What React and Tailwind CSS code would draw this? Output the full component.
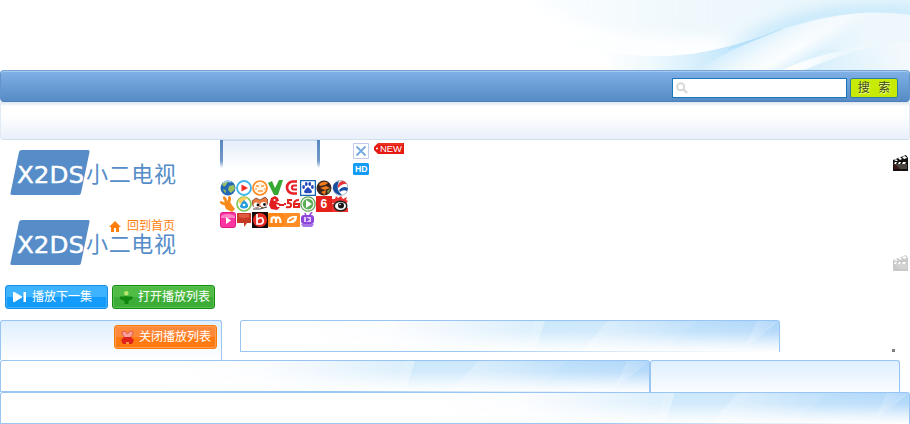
import React from 'react';

const CJK = "font-['Liberation_Sans','Noto_Sans_CJK_SC',sans-serif]";

function HeaderWaves() {
  return (
    <svg className="block h-[70px] w-[910px]" viewBox="0 0 910 70">
      <defs>
        <linearGradient id="sky" gradientUnits="userSpaceOnUse" x1="500" x2="910" y1="0" y2="0">
          <stop offset="0" stopColor="#edf7fc" stopOpacity="0" />
          <stop offset=".45" stopColor="#edf7fc" stopOpacity=".85" />
          <stop offset="1" stopColor="#e6f5fc" />
        </linearGradient>
        <linearGradient id="low" gradientUnits="userSpaceOnUse" x1="600" x2="740" y1="0" y2="0">
          <stop offset="0" stopColor="#fff" />
          <stop offset=".4" stopColor="#edf8fe" />
          <stop offset="1" stopColor="#bfe5fc" />
        </linearGradient>
        <linearGradient id="wave" gradientUnits="userSpaceOnUse" x1="760" y1="30" x2="790" y2="80">
          <stop offset="0" stopColor="#d3edfc" />
          <stop offset=".35" stopColor="#f0f9fe" />
          <stop offset=".6" stopColor="#fbfdff" />
          <stop offset=".85" stopColor="#dcf1fc" />
        </linearGradient>
        <linearGradient id="top" gradientUnits="userSpaceOnUse" x1="800" x2="870" y1="0" y2="0">
          <stop offset="0" stopColor="#f0f8fc" stopOpacity="0" />
          <stop offset="1" stopColor="#f0f8fc" />
        </linearGradient>
        <linearGradient id="tail" gradientUnits="userSpaceOnUse" x1="810" x2="900" y1="70" y2="45">
          <stop offset="0" stopColor="#d6effc" />
          <stop offset="1" stopColor="#f3f9fd" />
        </linearGradient>
        <linearGradient id="streak" gradientUnits="userSpaceOnUse" x1="790" x2="884" y1="0" y2="0">
          <stop offset="0" stopColor="#fff" />
          <stop offset="1" stopColor="#fff" stopOpacity="0" />
        </linearGradient>
        <filter id="soft" x="-20%" y="-60%" width="140%" height="220%"><feGaussianBlur stdDeviation="7" /></filter>
        <filter id="slight" x="-20%" y="-60%" width="140%" height="220%"><feGaussianBlur stdDeviation=".7" /></filter>
        <clipPath id="above"><path d="M500 0H910V15C860 9 820 17 780 30C740 43 705 56 660 56C620 56 590 49 560 42Z" /></clipPath>
      </defs>
      <rect width="910" height="70" fill="#fff" />
      <path d="M490 -20H930V40H660Q570 32 490 -20Z" fill="url(#sky)" filter="url(#soft)" />
      <g clipPath="url(#above)">
        <path d="M560 44Q640 36 720 42L700 64H580Z" fill="#fcfeff" filter="url(#soft)" />
        <path d="M725 50C760 26 810 -2 920 8V20C850 12 790 30 725 54Z" fill="#bce4fb" opacity=".85" filter="url(#soft)" />
      </g>
      <path d="M600 50C624 55 640 56 660 56C705 56 740 43 780 30L740 70H615Z" fill="url(#low)" />
      <path d="M697 70C715 58 745 44 780 30C820 17 860 9 910 15V70Z" fill="url(#wave)" filter="url(#slight)" />
      <path d="M800 24C835 14 870 9 910 15V50L800 50Z" fill="url(#top)" opacity=".9" />
      <path d="M728 49Q755 40 782 29" stroke="#9fd5f7" strokeWidth=".8" fill="none" opacity=".65" />
      <path d="M804 70Q840 54 884 44Q900 42 910 42V70Z" fill="url(#tail)" filter="url(#slight)" />
      <path d="M782 70Q825 50 884 44Q840 54 804 70Z" fill="url(#streak)" />
    </svg>
  );
}

function SearchIcon() {
  return (
    <svg className="size-3" viewBox="0 0 12 12" fill="none" stroke="#d9d9d9" strokeWidth="2">
      <circle cx="4.700" cy="4.700" r="3.500" />
      <path d="M7.400 7.400 11 11" strokeWidth="2.400" />
    </svg>
  );
}

function Logo() {
  return (
    <svg className="block h-[45px] w-[170px]" viewBox="0 0 170 45">
      <path d="M12 0H78Q80 0 79.500 2L71 43Q70.500 45 69 45H2Q0 45 .5 43L9 2Q9.500 0 12 0Z" fill="#568dc8" />
      <text x="7" y="32.500" fontSize="23" fill="#fff" stroke="#fff" strokeWidth=".4" textLength="67" lengthAdjust="spacingAndGlyphs" className="font-['DejaVu_Sans',sans-serif]">X2DS</text>
      <text x="76" y="32" fontSize="22" fill="#568dc8" textLength="90" className="font-['Noto_Sans_CJK_SC',sans-serif]">小二电视</text>
    </svg>
  );
}

function PanelArt({ id }) {
  return (
    <svg className="pointer-events-none h-[31px] w-[480px] shrink-0" viewBox="0 0 480 31">
      <defs>
        <linearGradient id={id + 'h'} x1="0" x2="1">
          <stop offset="0" stopColor="#fff" />
          <stop offset=".18" stopColor="#fcfdff" />
          <stop offset=".35" stopColor="#eaf5fe" />
          <stop offset=".5" stopColor="#d8eefc" />
          <stop offset=".75" stopColor="#c6e4fb" />
          <stop offset="1" stopColor="#b0d7fa" />
        </linearGradient>
        <linearGradient id={id + 'v'} x1="0" y1="0" x2="0" y2="1">
          <stop offset="0" stopColor="#fff" stopOpacity="0" />
          <stop offset=".35" stopColor="#fff" stopOpacity=".15" />
          <stop offset=".7" stopColor="#fff" stopOpacity=".65" />
          <stop offset="1" stopColor="#fff" />
        </linearGradient>
        <linearGradient id={id + 'a'} x1="0" x2="1">
          <stop offset="0" stopColor="#9fd3f8" stopOpacity=".25" />
          <stop offset="1" stopColor="#9fd3f8" stopOpacity=".05" />
        </linearGradient>
        <linearGradient id={id + 'b'} x1="0" x2="1">
          <stop offset="0" stopColor="#fff" stopOpacity=".25" />
          <stop offset="1" stopColor="#fff" stopOpacity="0" />
        </linearGradient>
      </defs>
      <path d="M0 0H480V31H0Z" fill={'url(#' + id + 'h)'} />
      <path d="M235 0H246L236 31H226Z" fill="#fff" opacity=".15" />
      <path d="M246 0H309L282 31H236Z" fill={'url(#' + id + 'a)'} />
      <path d="M309 0H375L345 31H282Z" fill={'url(#' + id + 'b)'} />
      <path d="M398 0H458L444 31H365Z" fill={'url(#' + id + 'a)'} />
      <path d="M458 0H480L450 22L444 31Z" fill={'url(#' + id + 'b)'} />
      <path d="M480 0V31H444L456 18Z" fill="#8fc7f6" opacity=".15" />
      <path d="M454 21 476 2" stroke="#eff8ff" opacity=".3" />
      <path d="M0 0H480V31H0Z" fill={'url(#' + id + 'v)'} />
    </svg>
  );
}

function GlossPanel({ id, className }) {
  return (
    <div className={'flex h-8 flex-col overflow-hidden rounded-t-[3px] border-x border-t border-[#98c5f3] bg-white ' + className}>
      <div className="flex h-[30px] justify-end overflow-hidden"><PanelArt id={id} /></div>
      <div className="flex h-px">
        <div className="grow bg-[#98c5f3]" />
        <div className="h-px w-[320px] bg-gradient-to-r from-[#98c5f3] via-[#dcebfa] via-50% to-white" />
      </div>
    </div>
  );
}

const sourceIcons = [
  <g><circle cx="8" cy="8" r="7.500" fill="#2368b5" /><path d="M2 4 6 1 8 2 6 5 4 7ZM9 6 14 5 15 9 11 13 8 10Z" fill="#9cc05b" /><path d="M3 9 6 10 6 13 4 12Z" fill="#84ad65" /><path d="M3 3Q7 0 11 2" stroke="#9ecbee" fill="none" strokeWidth="1.500" /></g>,
  <g><circle cx="8" cy="8" r="7" fill="#fff" stroke="#42b5e8" strokeWidth="1.900" /><path d="M5.500 4.500V11.500L12 8Z" fill="#f22b24" /></g>,
  <g><circle cx="8" cy="8" r="7" fill="#fff6e7" stroke="#ff8b22" strokeWidth="1.700" /><path d="M4 6h3M9 6h3M6 11h5" stroke="#ff9b42" strokeWidth="1.300" /><path d="M3 9h2M12 9h2" stroke="#ffc38d" strokeWidth="2" /></g>,
  <path d="M0 3 4 1 7 8 11 0H15L10 15H6Z" fill="#38a834" />,
  <g fill="none" stroke="#e6212a"><path d="M13 1.500H9A5.500 5.500 0 0 0 9 13.500H13" strokeWidth="2.700" /><path d="M13 5.500H10A2 2 0 0 0 10 9.500H13" strokeWidth="2.200" /></g>,
  <g><path d="M.5.500h15v15H.5Z" fill="#fff" stroke="#1764b4" strokeWidth="1.500" /><ellipse cx="3.600" cy="7" rx="1.400" ry="2" fill="#2749bd" /><ellipse cx="6.300" cy="4" rx="1.400" ry="2" fill="#2749bd" /><ellipse cx="9.800" cy="4" rx="1.400" ry="2" fill="#2749bd" /><ellipse cx="12.400" cy="7" rx="1.400" ry="2" fill="#2749bd" /><path d="M8 7Q12 10 12 12Q11 14 8 13Q5 14 4 12Q4 10 8 7Z" fill="#2749bd" /></g>,
  <g><circle cx="8" cy="8" r="7.500" fill="#3b241d" /><path d="M3 4Q8 0 12 3L9 5 4 6ZM4 8 10 6 14 8 9 10ZM5 12 10 10 9 15Z" fill="#f37b1f" /><path d="M11 11 15 8 12 14Z" fill="#6d9936" /></g>,
  <g><circle cx="8.500" cy="8" r="7.500" fill="#fff" stroke="#8794b7" strokeWidth=".7" /><path d="M7 1Q0 3 1 9Q3 15 10 15Q3 10 7 1Z" fill="#174e9f" /><path d="M8 2Q12 -1 15 4Q11 3 6 8Q5 5 8 2Z" fill="#e73536" /><path d="M7 10Q11 5 16 8L15 11Q11 9 8 12Z" fill="#174e9f" /></g>,
  <g fill="#f78a18"><ellipse cx="2" cy="7" rx="1.300" ry="2.500" transform="rotate(-45 2 7)" /><ellipse cx="5" cy="3" rx="1.500" ry="3" transform="rotate(-30 5 3)" /><ellipse cx="9.500" cy="3" rx="1.500" ry="3" /><path d="M3 6 9 4Q12 10 15 13L12 16 6 13Z" /></g>,
  <g><circle cx="8" cy="8" r="7" fill="#fff" stroke="#84c65a" strokeWidth="1.700" /><path d="M2 4Q7 -1 12 2L8 5 4 8Z" fill="#ffd05d" /><path d="M8 4Q13 8 12 11Q8 14 4 11Q4 8 8 4Z" fill="#249bdc" /><circle cx="8" cy="9" r="1.300" fill="#fff" /></g>,
  <g><path d="M0 5 4 2 8 4 13 1 16 4 15 9 10 12 8 10 5 12 1 10Z" fill="#ed793e" stroke="#5e3421" strokeWidth=".7" /><ellipse cx="4.500" cy="9" rx="3" ry="2.500" fill="#fff" /><ellipse cx="11.500" cy="8.500" rx="3.200" ry="2.500" fill="#fff" /><circle cx="6" cy="9" r="1.400" fill="#111" /><circle cx="12.500" cy="8.500" r="1.400" fill="#111" /><path d="M1 13Q8 14 15 11" stroke="#444" fill="none" /></g>,
  <g><path d="M3 2 7 0 10 2 11 5 8 6 13 8 11 9 8 8 9 11 12 11 9 14 3 13 1 9Z" fill="#e21d21" /><circle cx="6.500" cy="4" r="1" fill="#fff" /><path d="M11 9H16" stroke="#e21d21" strokeWidth="2" /></g>,
  <g fill="none" stroke="#e3251f" strokeWidth="2"><path d="M0 8H2M8 4H4V7Q8 7 7 10Q6 12 2 11M15 4Q10 4 10 8V11H15V8H10" /></g>,
  <g><circle cx="8" cy="8" r="7.200" fill="#eef5ec" stroke="#65a85b" strokeWidth="1.300" /><circle cx="8" cy="8" r="5.200" fill="#58ae51" /><path d="M6 4V12L12 8Z" fill="#fff" /></g>,
  <g><rect width="16" height="16" fill="#e5211c" /><text x="4.500" y="12" fontSize="12" fontWeight="700" fill="#fff" className="font-['Liberation_Sans',sans-serif]">6</text></g>,
  <g><path d="M0 3 3 3 4 0 6 2 9 0 11 3 15 1 14 4 16 5 14 8H0ZM0 7V16H16V12Z" fill="#ed3030" /><ellipse cx="8.500" cy="10" rx="7" ry="5.500" fill="#222" /><ellipse cx="8.500" cy="10" rx="5.500" ry="4" fill="#fff" /><circle cx="9" cy="9.500" r="3" fill="#171717" /><circle cx="8" cy="8.500" r=".8" fill="#fff" /></g>,
  <g><rect x=".5" y=".5" width="15" height="15" rx="2" fill="#fb35a0" stroke="#e5148a" /><path d="M1 4Q8 0 15 4V6H1Z" fill="#ff83c7" /><path d="M6 5V12L11 8.500Z" fill="#fff" /></g>,
  <g><path d="M1 1H15V11H11L8 15V11H1Z" fill="#c63a24" /><path d="M3 2H13V5Q8 7 3 5Z" fill="#df5a3e" /></g>,
  <g><rect width="16" height="16" fill="#160909" /><circle cx="8" cy="8" r="7" fill="#e62b24" /><path d="M5 2V11M5 8Q7 5 10 6Q13 10 9 12H5V8" stroke="#fff" strokeWidth="1.700" fill="none" /></g>,
  <g><rect y="1" width="16" height="14" rx="1" fill="#ff8617" /><path d="M3.500 11V8Q3.500 5 6 5.500Q8 5 8 9V11M8 9Q8 5 10.500 5.500Q12.500 6 12.500 11" stroke="#fff" strokeWidth="2.200" fill="none" /></g>,
  <g><rect y="1" width="16" height="14" rx="1" fill="#ff8c25" /><path d="M3 11Q2 5 9 4L13 4Q13 12 6 11Z" fill="#fff" /><path d="M5 9 10 6" stroke="#ff8c25" strokeWidth="1.800" /></g>,
  <g><path d="M6 4 5 1M9 4 12 0" stroke="#9c4bdc" fill="none" strokeWidth="1.500" /><rect x="1" y="3" width="13" height="9" rx="3" fill="#8d46dc" /><path d="M4 5H11V10H4Z" fill="#dfc7fa" /><path d="M6 5V10L10 7.500Z" fill="#8d46dc" /><path d="M1 12H14L12 15H3Z" fill="#a677e4" /></g>,
];

function Clapper({ faded }) {
  const ink = faded ? '#c9c9c9' : '#141010';
  const body = faded ? '#d3d3d3' : '#4a4541';
  return (
    <svg className="size-4" viewBox="0 0 16 16">
      <path d="M0 5 13 0 15 3V16H0V6Z" fill={ink} />
      <path d="M1 9H14V14H1Z" fill={body} />
      <path d="M1 8 7 14H1Z" fill={faded ? '#cacaca' : '#3c1714'} />
      <path d="M1 5 3 4 5 6 3 6ZM5 3 7 2 9 4 7 5ZM9 2 12 1 14 3 11 4ZM2 7H4L3 9H1ZM6 7H8L7 9H5ZM10 7H13L12 9H9Z" fill="#fff" />
    </svg>
  );
}

function HomeIcon() {
  return <svg className="h-[11px] w-3" viewBox="0 0 12 11"><path d="M6 0 12 6H10V11H7V7H5V11H2V6H0Z" fill="#ff7f0e" /></svg>;
}

function NextIcon() {
  return <svg className="h-[10px] w-[13px]" viewBox="0 0 13 10"><path d="M0 0H1.500L9 4.500V5.500L1.500 10H0ZM10.500 0H13V10H10.500Z" fill="#fff" /></svg>;
}

function OpenIcon() {
  return <svg className="size-[13px]" viewBox="0 0 13 13"><circle cx="6.300" cy="2.300" r="2.200" fill="#b8e66b" /><path d="M0 5.500H4.500L6 5 8 5.500H12.500V8L8.500 10V13H4.500V10L0 8Z" fill="#108810" /></svg>;
}

function CloseIcon() {
  return <svg className="size-[13px]" viewBox="0 0 13 13"><path d="M1 1 4 0 6.500 3 9 0 12 1V3L9 7H4L1 3Z" fill="#f7a09b" stroke="#d84037" strokeWidth=".7" /><path d="M3 6H10L13 9 11 13H8L6.500 11 5 13H2L0 9Z" fill="#df211b" /><path d="M5 11H8V13H5Z" fill="#f49445" /></svg>;
}

function Button({ children, icon, className, gap }) {
  return (
    <button className={'flex h-6 w-[103px] items-center rounded-[3px] border text-xs leading-none whitespace-nowrap text-white ' + gap + ' ' + className}>
      {icon}<span>{children}</span>
    </button>
  );
}

export default function App() {
  return (
    <div className={'h-[424px] w-[910px] overflow-hidden bg-white text-xs ' + CJK}>
      <header className="h-[70px]"><HeaderWaves /></header>
      <nav className="flex h-8 items-start justify-end overflow-hidden rounded-[4px] border border-t-[#76a4d7] border-x-[#6594cd] border-b-[#4d80ba] bg-gradient-to-b from-[#80b1e7] to-[#568bc5] pt-[7px] pr-[11px] shadow-[inset_0_1px_0_#a5c9ef]">
        <label className="mr-[3px] flex h-5 w-[175px] items-center border border-[#1b76b9] bg-white pl-[3px]"><SearchIcon /></label>
        <button className="h-5 w-12 rounded-[2px] border border-[#2f7da1] bg-[#c7eb06] text-xs leading-[17px] text-[#3d4a24] [text-shadow:1px_1px_#f1ff9d] [word-spacing:1px]">搜&nbsp; 索</button>
      </nav>
      <div className="h-[38px] rounded-b-[3px] border-x border-b border-x-[#e2ebf5] border-b-[#d1e0ef] bg-[linear-gradient(#dce6ef,#fff_12%,#fff_35%,#e9f0fa)]" />
      <main className="flex h-[180px]">
        <aside className="w-[220px] pt-[10px]">
          <div className="pl-[10px]"><Logo /></div>
          <div className="relative mt-[25px] pl-[10px]">
            <Logo />
            <a className="absolute top-0 left-[109px] flex items-center gap-[6px] leading-3 text-[#ff7f0e]"><HomeIcon /><span>回到首页</span></a>
          </div>
          <div className="mt-5 flex gap-1 pl-[5px]">
            <Button icon={<NextIcon />} gap="gap-[6px] pl-[7px]" className="border-[#1490eb] bg-[linear-gradient(#3eb3ff_50%,#139bfc_50%)] shadow-[inset_0_0_0_1px_#43b0fb]">播放下一集</Button>
            <Button icon={<OpenIcon />} gap="gap-[5px] pl-[7px]" className="border-[#158d15] bg-[linear-gradient(#50bb45_50%,#3cad37_50%)] shadow-[inset_0_0_0_1px_#5cc055]">打开播放列表</Button>
          </div>
        </aside>
        <section className="w-[133px]">
          <div className="h-7 w-[100px] bg-gradient-to-b from-[#5688bf] via-[#749bc9] via-75% to-white px-[3px]">
            <div className="h-7 border-t border-[#c8d9ed] bg-gradient-to-b from-[#e5eefb] to-white" />
          </div>
          <div className="mt-3 grid w-32 grid-cols-8">
            {sourceIcons.map((icon, i) => <svg key={i} className="size-4" viewBox="0 0 16 16">{icon}</svg>)}
          </div>
        </section>
        <div className="flex gap-[5px] pt-[3px]">
          <div className="flex flex-col gap-1">
            <svg className="size-4" viewBox="0 0 16 16"><path d="M.5.500h15v15H.5Z" fill="#fff" stroke="#c2c9f1" /><path d="M3.500 3.500 12.500 12.500M12.500 3.500 3.500 12.500" stroke="#75a8df" strokeWidth="1.800" /></svg>
            <svg className="h-3 w-4" viewBox="0 0 16 12"><rect width="16" height="12" rx="1.500" fill="#139bf5" /><text x="2" y="9.300" fontSize="9" fontWeight="700" textLength="12.500" lengthAdjust="spacingAndGlyphs" fill="#fff" className="font-['Liberation_Sans',sans-serif]">HD</text></svg>
          </div>
          <svg className="h-[11px] w-[30px]" viewBox="0 0 30 11"><path d="M4 0H30V11H4L0 7V4Z" fill="#e51b12" /><path d="M4 1H29" stroke="#f54b36" /><circle cx="3" cy="5.500" r="1" fill="#fff" /><text x="6" y="8.800" fontSize="9" textLength="22" lengthAdjust="spacingAndGlyphs" fill="#fff" className="font-['Liberation_Sans',sans-serif]">NEW</text></svg>
        </div>
        <div className="ml-auto flex flex-col gap-[84px] pt-[15px] pr-[1px]"><Clapper /><Clapper faded /></div>
      </main>
      <section className="flex h-10">
        <div className="flex h-10 w-[222px] justify-end rounded-t-[3px] border-x border-t border-[#98c5f3] bg-gradient-to-b from-[#dfefff] to-white pt-1 pr-1">
          <Button icon={<CloseIcon />} gap="gap-[5px] pl-[6px]" className="border-[#fb7905] bg-[linear-gradient(#ff893b_50%,#ff7b12_50%)] shadow-[inset_0_0_0_1px_#ff9c55]">关闭播放列表</Button>
        </div>
        <GlossPanel id="playlist" className="ml-[18px] w-[540px]" />
        <div className="mt-[29px] ml-[112px] size-[3px] bg-[#7d7d78]" />
      </section>
      <section className="flex h-8">
        <GlossPanel id="details" className="w-[650px]" />
        <div className="h-8 w-[250px] rounded-t-[3px] border-x border-t border-[#98c5f3] bg-gradient-to-b from-[#dfefff] to-[#fafcff]" />
      </section>
      <GlossPanel id="comments" className="w-[910px]" />
    </div>
  );
}
